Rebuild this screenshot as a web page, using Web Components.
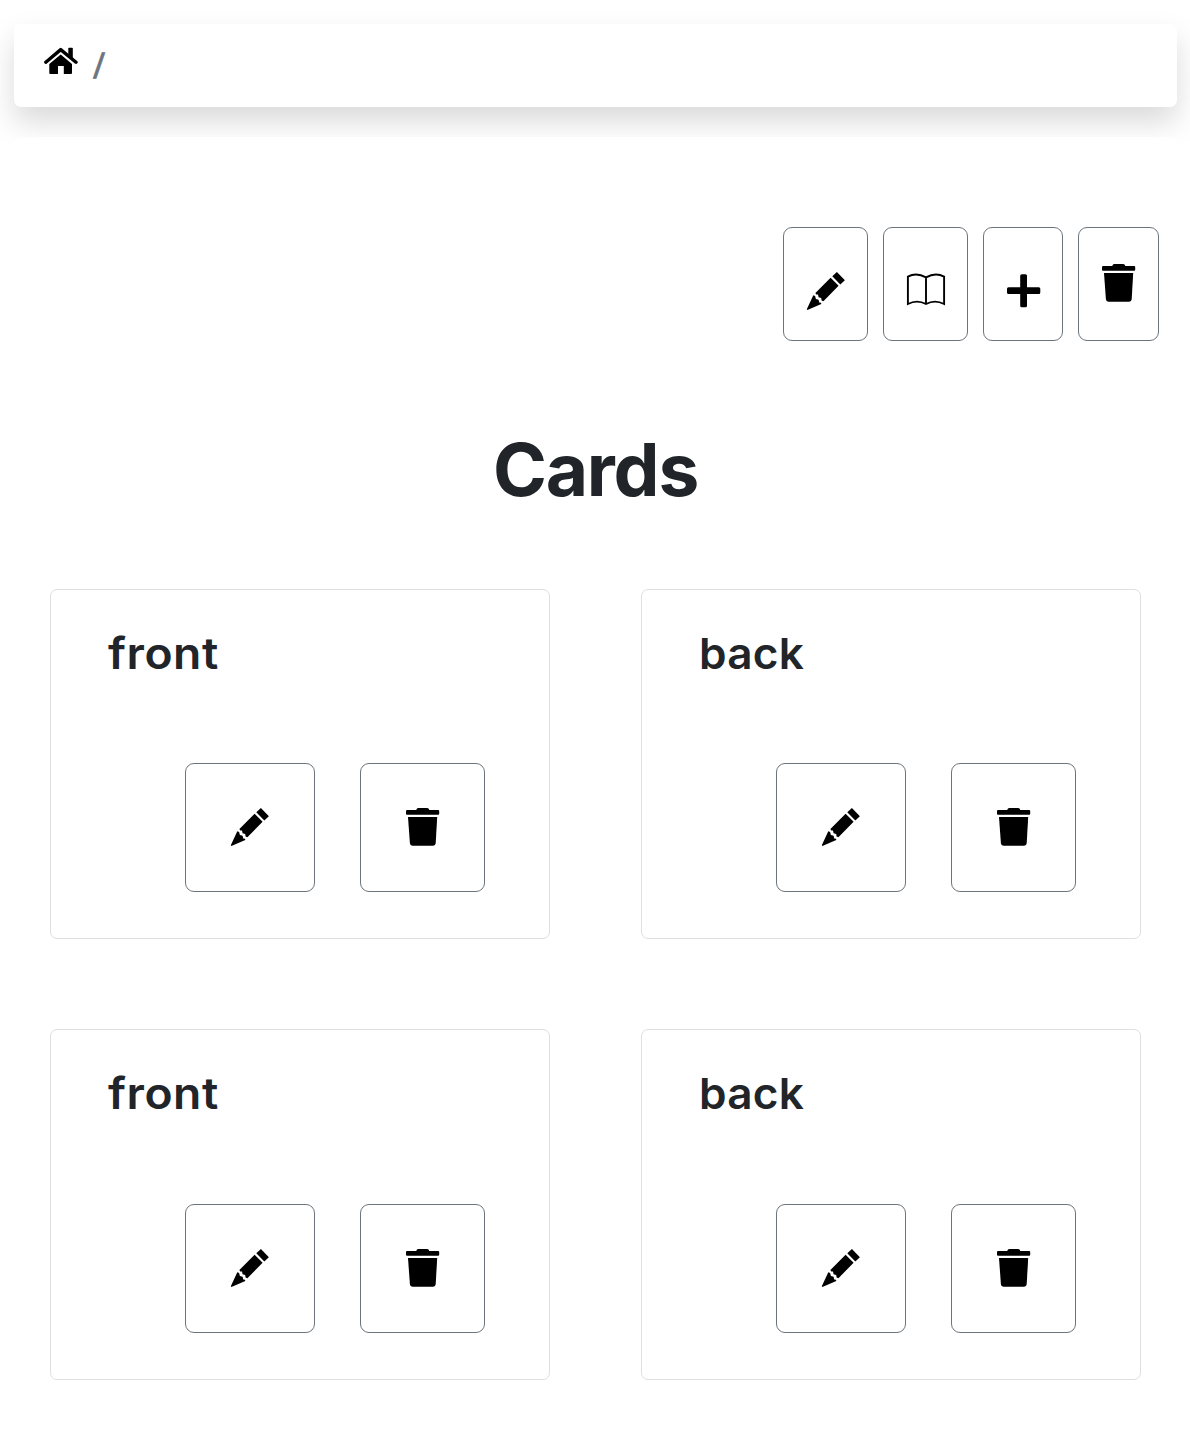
<!DOCTYPE html>
<html lang="en">
<head>
<meta charset="utf-8">
<title>Cards</title>
<style>
  html, body { margin: 0; background: #fff; }
  body { font-family: Inter, "Liberation Sans", sans-serif; color: #212529; }
</style>
</head>
<body>
<cards-page></cards-page>
<script>
const ICONS = {
  home: [34, 28, '<path d="M1.8 15.2 L16.7 2.6 L32 15.2" fill="none" stroke="#000" stroke-width="3.4" stroke-linecap="round" stroke-linejoin="round"/><path d="M24.3 1.6 Q24.3 .8 25.1 .8 H28 Q28.8 .8 28.8 1.6 V12.4 L24.3 8.8Z"/><path d="M16.7 7.6 L28 17 V26 Q28 27 27 27 H19.8 V19 H14 V27 H6.3 Q5.3 27 5.3 26 V17Z"/>'],
  pencil: [39, 38, '<path d="M30.9 0 L38.9 8.2 L34.3 12.4 L26.3 4.3Z"/><path d="M24.6 5.7 L32.6 13.8 L17.4 29.2 L15.6 28.4 L15.2 25.9 L12.6 25.2 L12 22.6 L10.2 22.4 L9.4 20.9Z"/><path d="M7.3 23.2 L9.1 24.1 L9.9 27 L12.6 27.8 L13.2 30.4 L15 30.8 L15.3 31.9 L1.4 38 L.8 37.3Z"/>'],
  book: [40, 33, '<path d="M20 4.4 Q10.5 -1 1.9 3.6 V31 Q11 26.2 20 31 Q29 26.2 38.1 31 V3.6 Q29.5 -1 20 4.4 V31" fill="none" stroke="#000" stroke-width="1.9"/>'],
  plus: [34, 34, '<path d="M14.9 .3 H18.5 Q20 .3 20 1.8 V13.3 H31.8 Q33.3 13.3 33.3 14.8 V18.5 Q33.3 20 31.8 20 H20 V31.8 Q20 33.3 18.5 33.3 H14.7 Q13.2 33.3 13.2 31.8 V20 H1.5 Q0 20 0 18.5 V14.8 Q0 13.3 1.5 13.3 H13.2 V1.8 Q13.2 .3 14.9 .3Z"/>'],
  trash: [34, 38, '<path d="M1 2 H10.2 Q10.8 0 12.2 0 H21.2 Q22.8 0 23.3 2 H32.2 Q33.2 2 33.2 3 V5.7 Q33.2 6.7 32.2 6.7 H1 Q0 6.7 0 5.7 V3 Q0 2 1 2Z"/><path d="M2 9 H31.2 L29.7 35 Q29.4 37.7 26.8 37.7 H6.8 Q4.2 37.7 3.9 35Z"/>']
};
class CardIcon extends HTMLElement {
  connectedCallback() {
    const [w, h, body] = ICONS[this.getAttribute('name')];
    this.attachShadow({mode: 'open'}).innerHTML = `<style>:host{display:block;line-height:0}svg{display:block}</style>
      <svg width="${w}" height="${h}" viewBox="0 0 ${w} ${h}" fill="#000" aria-hidden="true">${body}</svg>`;
  }
}
customElements.define('card-icon', CardIcon);

class IconButton extends HTMLElement {
  connectedCallback() {
    this.attachShadow({mode: 'open'}).innerHTML = `<style>
      :host{display:block}
      button{display:flex;align-items:flex-start;justify-content:flex-start;box-sizing:border-box;width:100%;height:var(--h,129px);margin:0;border:1px solid #6c757d;border-radius:9px;background:transparent;padding:var(--pt,44px) 0 0 var(--pl,45px)}
      </style><button><card-icon name="${this.getAttribute('icon')}"></card-icon></button>`;
  }
}
customElements.define('icon-button', IconButton);

class CrumbBar extends HTMLElement {
  connectedCallback() {
    this.attachShadow({mode: 'open'}).innerHTML = `<style>
      :host{display:block;padding:24px 13px 0 14px}
      nav{box-sizing:border-box;height:83px;border-radius:7px;background:#fff;box-shadow:0 15px 30px rgba(0,0,0,.15);display:flex;align-items:flex-start;padding:23px 30px 0}
      span{font:35px/40px "Liberation Sans",sans-serif;color:#6c757d;-webkit-text-stroke:.8px #6c757d;margin:-1px 0 0 15.5px;transform:skewX(-4deg)}
      </style><nav><card-icon name="home"></card-icon><span>/</span></nav>`;
  }
}
customElements.define('crumb-bar', CrumbBar);

class ActionBar extends HTMLElement {
  connectedCallback() {
    this.attachShadow({mode: 'open'}).innerHTML = `<style>
      :host{display:flex;justify-content:flex-end;gap:15px;padding:90px 18px 0 0;--h:114px}
      </style>
      <icon-button icon="pencil" style="width:85px;--pt:44px;--pl:22px"></icon-button>
      <icon-button icon="book" style="width:85px;--pt:45px;--pl:22px"></icon-button>
      <icon-button icon="plus" style="width:80px;--pt:46px;--pl:23px"></icon-button>
      <icon-button icon="trash" style="width:81px;--pt:36px;--pl:23px"></icon-button>`;
  }
}
customElements.define('action-bar', ActionBar);

class FlashCard extends HTMLElement {
  connectedCallback() {
    this.attachShadow({mode: 'open'}).innerHTML = `<style>
      :host{display:flex;flex-direction:column;box-sizing:border-box;width:500px;height:100%;border:1px solid #dfdfdf;border-radius:7px;padding:36px 64px 46px 57px}
      h5{margin:0;font-size:43px;line-height:54px;font-weight:600;white-space:nowrap;letter-spacing:var(--ls,0);transform:scaleX(var(--sx,1));transform-origin:0 0}
      div{display:flex;justify-content:flex-end;gap:45px;margin-top:auto}
      </style><h5><slot></slot></h5>
      <div><icon-button icon="pencil" style="width:130px;--pl:44.4px"></icon-button><icon-button icon="trash" style="width:125px"></icon-button></div>`;
  }
}
customElements.define('flash-card', FlashCard);

class CardsPage extends HTMLElement {
  connectedCallback() {
    this.attachShadow({mode: 'open'}).innerHTML = `<style>
      :host{display:block;min-height:1440px;overflow:hidden}
      main{position:relative;margin:30px 13px 0 14px;background:#fff;border-radius:7px}
      h1{margin:83px 0 0;height:91px;font-size:73px;line-height:92px;font-weight:700;text-align:center;letter-spacing:-1.2px}
      section{display:grid;grid-template-columns:500px 500px;grid-template-rows:350px 351px;column-gap:91px;row-gap:90px;padding:74px 0 60px 36px}
      .front{--ls:.5px;--sx:1.075}
      .back{--ls:.3px;--sx:1.025}
      </style>
      <crumb-bar></crumb-bar>
      <main>
        <action-bar></action-bar>
        <h1>Cards</h1>
        <section>
          <flash-card class="front">front</flash-card><flash-card class="back">back</flash-card>
          <flash-card class="front">front</flash-card><flash-card class="back">back</flash-card>
        </section>
      </main>`;
  }
}
customElements.define('cards-page', CardsPage);
</script>
</body>
</html>
